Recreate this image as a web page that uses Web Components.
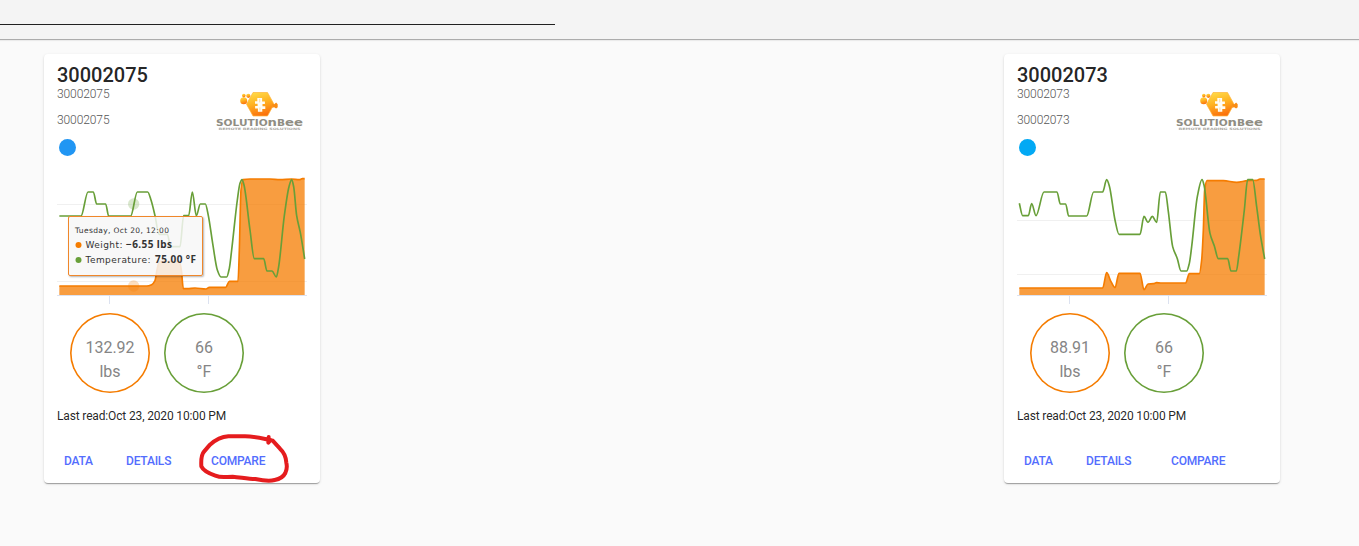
<!DOCTYPE html>
<html lang="en">
<head>
<meta charset="utf-8">
<title>Devices</title>
<style>
  body {
    margin: 0;
    background: #fafafa;
    font-family: Roboto, "Liberation Sans", sans-serif;
  }
</style>
</head>
<body>
<device-dashboard></device-dashboard>

<script>
const define = (name, cls) => window.customElements.define(name, cls);

class BrandLogo extends HTMLElement {
  constructor() {
    super();
    this.attachShadow({ mode: "open" }).innerHTML = `
      <style>
        :host { display: block; width: 90px; height: 42px; }
        svg { display: block; }
      </style>
      <svg width="90" height="42" viewBox="0 0 90 42">
        <defs>
          <linearGradient id="honey" x1="0.2" y1="0" x2="0.5" y2="1">
            <stop offset="0" stop-color="#ffdc48"/>
            <stop offset="0.5" stop-color="#ffb020"/>
            <stop offset="1" stop-color="#fb700c"/>
          </linearGradient>
        </defs>
        <g fill="url(#honey)">
          <path d="M38 2.5h14.5l6.5 11.7-6.5 11.8H38l-6.5-11.8z" stroke="#ffb53a" stroke-width=".7" stroke-linejoin="round"/>
          <circle cx="28.7" cy="10.8" r="3.5"/>
          <circle cx="28.8" cy="5.6" r="1.8"/>
          <circle cx="33.3" cy="5.8" r="2.1"/>
        </g>
        <path d="M57.5 14l1.8.2 1.8-1.6 1.6 1.6v3l-1.6 1.4-1.9-1.4-2 .5z" fill="#f98c14"/>
        <path d="M42.3 8h4.8v3.6h2.8v2.4h-2.4v2.2h2.8v2.8h-3v2.8h-4.4v-3.3h-2.8V16h2.5v-2.2h-2.6v-2.6h2.3z" fill="#fffdf5"/>
        <path d="M44.7 8.8v3.6M44.9 17.5v3" stroke="#ffc765" stroke-width=".6"/>
        <text x="1" y="36" font-family="DejaVu Sans, sans-serif" font-size="8.8" font-weight="bold" fill="#8f8d83" textLength="87" lengthAdjust="spacingAndGlyphs">SOLUTIO<tspan font-size="11">n</tspan>B<tspan font-size="11">ee</tspan></text>
        <text x="3.5" y="39.9" font-family="DejaVu Sans, sans-serif" font-size="3.2" font-weight="bold" fill="#aaa8a2" textLength="82" lengthAdjust="spacingAndGlyphs">REMOTE READING SOLUTIONS</text>
      </svg>
    `;
  }
}
define("brand-logo", BrandLogo);

// Monotone cubic path through [x, y] points, so plateaus stay flat.
function spline(points) {
  const slope = i => {
    const [x0, y0] = points[i];
    const [x1, y1] = points[i + 1];
    return (y1 - y0) / (x1 - x0);
  };
  const tangents = points.map((p, i) => {
    if (i === 0) return slope(0);
    if (i === points.length - 1) return slope(i - 1);
    const a = slope(i - 1);
    const b = slope(i);
    return a * b <= 0 ? 0 : (2 * a * b) / (a + b);
  });
  let d = `M${points[0]}`;
  for (let i = 1; i < points.length; i++) {
    const [x0, y0] = points[i - 1];
    const [x1, y1] = points[i];
    const h = (x1 - x0) / 3;
    d += `C${x0 + h} ${y0 + tangents[i - 1] * h} ${x1 - h} ${y1 - tangents[i] * h} ${x1} ${y1}`;
  }
  return d;
}

class DeviceChart extends HTMLElement {
  constructor() {
    super();
    this.attachShadow({ mode: "open" });
  }

  set series({ weight, temperature, grid, markers = [] }) {
    const line = spline(weight);
    const last = weight[weight.length - 1][0];
    this.shadowRoot.innerHTML = `
      <style>
        :host { display: block; position: relative; width: 250px; height: 140px; }
        svg { display: block; }
        path { fill: none; stroke-width: 5; stroke-linejoin: round; }
      </style>
      <svg width="250" height="140" viewBox="21 0 750 420">
        ${grid.map(y => `<path d="M21 ${y}H771" stroke="#f0f0f0" style="stroke-width:3"/>`).join("")}
        <path d="M21 376.5H771M178.5 376.5V402M475.5 376.5V402" stroke="#dce2f0" style="stroke-width:3"/>
        <path d="${line}L${last} 375L${weight[0][0]} 375Z" style="fill:#f57c00;fill-opacity:.75"/>
        <path d="${line}" stroke="#f57c00"/>
        <path d="${spline(temperature)}" stroke="#689f38"/>
        ${markers.map(m => `<circle cx="${m.x}" cy="${m.y}" r="17" fill="${m.color}" fill-opacity=".25"/>`).join("")}
      </svg>
      <slot></slot>
    `;
  }
}
define("device-chart", DeviceChart);

class ChartTooltip extends HTMLElement {
  constructor() {
    super();
    this.attachShadow({ mode: "open" }).innerHTML = `
      <style>
        :host {
          position: absolute;
          left: 11px;
          top: 46px;
          box-sizing: border-box;
          width: 135px;
          height: 60px;
          border: 1px solid #f0872a;
          border-radius: 2px;
          background: rgba(247, 247, 247, .85);
          box-shadow: 1px 1px 2px rgba(0, 0, 0, .3);
        }
        svg { display: block; }
        text { font: 9px "DejaVu Sans", sans-serif; fill: #333; }
        .head { font-size: 7.5px; }
        .value { font: bold 10px "Noto Sans", sans-serif; }
      </style>
      <svg width="133" height="58">
        <text class="head" x="6" y="16" textLength="94">Tuesday, Oct 20, 12:00</text>
        <circle cx="9.5" cy="28" r="3" fill="#f57c00"/>
        <text x="16.5" y="31" textLength="37">Weight:</text>
        <text class="value" x="57" y="31" textLength="46">−6.55 lbs</text>
        <circle cx="9.5" cy="43" r="3" fill="#689f38"/>
        <text x="16.5" y="46" textLength="65">Temperature:</text>
        <text class="value" x="86" y="46" textLength="41">75.00 °F</text>
      </svg>
    `;
  }
}
define("chart-tooltip", ChartTooltip);

class ReadingCircle extends HTMLElement {
  constructor() {
    super();
    this.attachShadow({ mode: "open" }).innerHTML = `
      <style>
        :host {
          display: flex;
          flex-direction: column;
          align-items: center;
          box-sizing: border-box;
          width: 80px;
          height: 80px;
          padding-top: 23px;
          border-radius: 50%;
          box-shadow: inset 0 0 0 1.6px var(--ring);
          color: #858585;
          font-size: 16px;
          line-height: 24px;
        }
      </style>
      <slot name="value"></slot>
      <slot></slot>
    `;
  }
}
define("reading-circle", ReadingCircle);

class PenMark extends HTMLElement {
  constructor() {
    super();
    this.attachShadow({ mode: "open" }).innerHTML = `
      <style>
        :host { position: absolute; left: 146px; top: 372px; pointer-events: none; }
        svg { display: block; }
      </style>
      <svg width="110" height="64" viewBox="420 378 330 192" fill="none" stroke="#e51c1e" stroke-width="12" stroke-linecap="round" stroke-linejoin="round">
        <path d="M656 411L655 428L662 420C635 415 612 409 585 409L535 409C510 411 495 421 480 434L462 455C454 464 453 482 454 499C460 512 479 521 496 527C515 535 529 530 548 530C572 532 594 537 616 537C635 541 660 544 674 540C690 537 701 529 706 519C711 508 711 496 709 488C708 469 701 456 690 446L668 422"/>
      </svg>
    `;
  }
}
define("pen-mark", PenMark);

class DeviceCard extends HTMLElement {
  constructor() {
    super();
    this.attachShadow({ mode: "open" });
  }

  set device(device) {
    this.shadowRoot.innerHTML = `
      <style>
        :host {
          display: block;
          position: relative;
          box-sizing: border-box;
          width: 276px;
          height: 429px;
          padding: 10px 13px 0;
          border-radius: 4px;
          background: #fff;
          box-shadow: 0 2px 1px -1px rgba(0,0,0,.2), 0 1px 1px rgba(0,0,0,.14), 0 1px 3px rgba(0,0,0,.12);
        }
        header { display: flex; justify-content: space-between; height: 106px; }
        h2 { margin: 0; font-size: 20px; font-weight: 500; line-height: 23px; color: rgba(0,0,0,.87); letter-spacing: 0; }
        p { margin: 0 0 12px; font-size: 12px; font-weight: 300; line-height: 14px; color: #555; letter-spacing: -.1px; }
        .status { width: 17px; height: 17px; margin: 12px 0 0 1.5px; border-radius: 50%; background: var(--status); }
        brand-logo { margin: 26px 2px 0 0; }
        .circles { display: flex; gap: 14px; margin: 3px 0 0 13px; }
        .read { margin-top: 16px; font-size: 12px; line-height: 14px; letter-spacing: -.15px; color: rgba(0,0,0,.87); }
        nav { display: grid; grid-template-columns: 62px 85px auto; margin: 31px 0 0 7px; }
        a { font-size: 12px; font-weight: 500; line-height: 14px; letter-spacing: -.2px; color: #536dfe; }
      </style>
      <header>
        <div>
          <h2>${device.id}</h2>
          <p>${device.id}</p>
          <p>${device.id}</p>
          <div class="status" style="--status:${device.status}"></div>
        </div>
        <brand-logo></brand-logo>
      </header>
      <device-chart>${device.tooltip ? "<chart-tooltip></chart-tooltip>" : ""}</device-chart>
      <div class="circles">
        <reading-circle style="--ring:#f57c00"><span slot="value">${device.lbs}</span>lbs</reading-circle>
        <reading-circle style="--ring:#689f38"><span slot="value">${device.temp}</span>°F</reading-circle>
      </div>
      <div class="read">Last read:Oct 23, 2020 10:00 PM</div>
      <nav><a>DATA</a><a>DETAILS</a><a>COMPARE</a></nav>
      <slot></slot>
    `;
    this.shadowRoot.querySelector("device-chart").series = device;
  }
}
define("device-card", DeviceCard);

const devices = [
  {
    id: "30002075",
    status: "#2196f3",
    lbs: "132.92",
    temp: 66,
    tooltip: true,
    grid: [103.5, 334.5],
    markers: [{ x: 251, y: 102, color: "#689f38" }, { x: 251, y: 348, color: "#f57c00" }],
    weight: [[28, 348], [290, 348], [305, 344], [315, 332], [321, 300], [328, 274], [388, 274], [394, 300], [400, 356], [412, 356], [435, 354], [468, 357], [478, 352], [527, 352], [538, 334], [564, 334], [568, 240], [573, 60], [579, 29], [600, 27], [660, 27], [690, 29], [725, 27], [748, 29], [757, 26], [764, 26]],
    temperature: [[28, 138], [93, 138], [114, 66], [130, 66], [140, 102], [167, 102], [176, 138], [242, 138], [262, 66], [293, 66], [303, 90], [315, 137], [327, 193], [352, 193], [362, 230], [390, 230], [401, 137], [416, 137], [427, 66], [439, 137], [451, 102], [466, 102], [475, 137], [488, 220], [502, 300], [513, 321], [530, 321], [538, 295], [545, 240], [562, 90], [570, 40], [576, 29], [582, 45], [600, 180], [613, 266], [641, 266], [651, 303], [666, 303], [679, 321], [686, 290], [703, 137], [717, 50], [725, 29], [731, 50], [740, 137], [751, 188], [764, 267]]
  },
  {
    id: "30002073",
    status: "#03a9f4",
    lbs: "88.91",
    temp: 66,
    grid: [151.5, 313.5],
    weight: [[28, 354], [278, 354], [290, 308], [303, 335], [315, 353], [327, 310], [390, 310], [402, 359], [414, 342], [430, 341], [440, 338], [452, 339], [527, 339], [538, 311], [568, 311], [575, 270], [580, 180], [584, 60], [591, 32], [640, 32], [680, 37], [713, 32], [740, 31], [750, 27], [764, 27]],
    temperature: [[28, 100], [38, 137], [55, 137], [65, 101], [78, 137], [102, 66], [141, 66], [151, 102], [167, 102], [176, 138], [230, 138], [251, 66], [278, 66], [290, 29], [298, 48], [315, 150], [327, 193], [390, 193], [402, 139], [414, 157], [427, 139], [440, 157], [451, 66], [466, 66], [475, 125], [488, 230], [502, 266], [513, 303], [530, 303], [538, 280], [545, 230], [562, 80], [576, 29], [582, 45], [600, 190], [613, 228], [625, 266], [653, 266], [663, 303], [679, 303], [686, 260], [703, 120], [713, 29], [728, 29], [740, 110], [751, 193], [764, 267]]
  }
];

class DeviceDashboard extends HTMLElement {
  constructor() {
    super();
    this.attachShadow({ mode: "open" }).innerHTML = `
      <style>
        :host { display: block; height: 546px; overflow: hidden; }
        .toolbar {
          box-sizing: border-box;
          height: 40px;
          padding-top: 24px;
          background: #f4f4f4;
          border-bottom: 1px solid #acacac;
          box-shadow: 0 1px 1px rgba(0,0,0,.06);
        }
        .field { width: 555px; height: 1px; background: #212121; }
        main { display: grid; grid-template-columns: 276px 276px; column-gap: 684px; padding: 14px 44px; }
      </style>
      <div class="toolbar"><div class="field"></div></div>
      <main></main>
    `;
    const $main = this.shadowRoot.querySelector("main");
    devices.forEach((device, index) => {
      const $card = document.createElement("device-card");
      $card.device = device;
      if (index === 0) {
        $card.appendChild(document.createElement("pen-mark"));
      }
      $main.appendChild($card);
    });
  }
}
define("device-dashboard", DeviceDashboard);
</script>
</body>
</html>
